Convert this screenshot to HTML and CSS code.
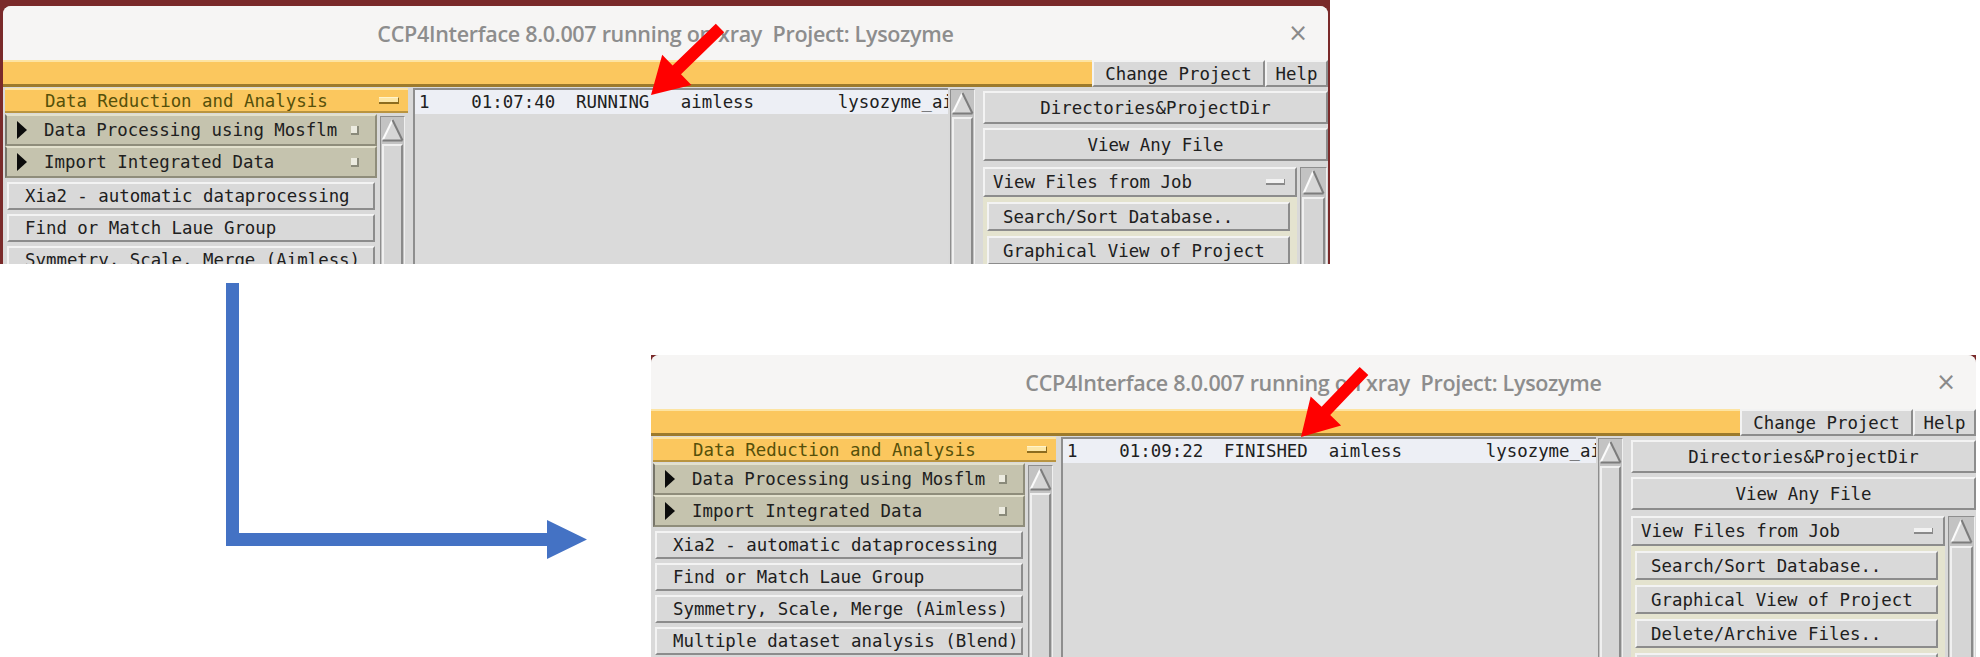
FILE: index.html
```html
<!DOCTYPE html>
<html>
<head>
<meta charset="utf-8">
<title>CCP4Interface job status</title>
<link rel="stylesheet" href="styles.css">
</head>
<body>

<div class="shot shot-top">
  <div class="win">
    <div class="titlebar">
      <span class="title">CCP4Interface 8.0.007 running on xray  Project: Lysozyme</span>
      <span class="close">×</span>
    </div>
    <div class="menubar">
      <div class="menufill"></div>
      <div class="btn mbtn change">Change Project</div>
      <div class="btn mbtn help">Help</div>
    </div>
    <div class="body">
      <div class="leftcol">
        <div class="modhead"><span class="modtext">Data Reduction and Analysis</span><span class="dash ydash"></span></div>
        <div class="leftinner">
          <div class="tasks">
            <div class="folder"><span class="tri"></span><span class="ftext">Data Processing using Mosflm</span><span class="ind"></span></div>
            <div class="folder"><span class="tri"></span><span class="ftext">Import Integrated Data</span><span class="ind"></span></div>
            <div class="btn task">Xia2 - automatic dataprocessing</div>
            <div class="btn task">Find or Match Laue Group</div>
            <div class="btn task">Symmetry, Scale, Merge (Aimless)</div>
            <div class="btn task">Multiple dataset analysis (Blend)</div>
            <div class="btn task"></div>
          </div>
          <div class="vscroll sc-left">
            <div class="sarrow"><svg width="23" height="24" viewBox="0 0 23 24"><polygon points="11.5,2 21.5,22.5 1.5,22.5" fill="#d6d6d6"/><line x1="1.5" y1="22.5" x2="11.5" y2="2" stroke="#fbfbfb" stroke-width="2"/><line x1="11.5" y1="2" x2="21.5" y2="22.5" stroke="#7c7c7c" stroke-width="2"/><line x1="1.5" y1="22.5" x2="21.5" y2="22.5" stroke="#7c7c7c" stroke-width="2"/></svg></div>
            <div class="slider"></div>
          </div>
        </div>
      </div>
      <div class="joblist">
        <div class="jobrow">1    01:07:40  RUNNING   aimless        lysozyme_aimless_1</div>
      </div>
      <div class="vscroll sc-list">
        <div class="sarrow"><svg width="23" height="24" viewBox="0 0 23 24"><polygon points="11.5,2 21.5,22.5 1.5,22.5" fill="#d6d6d6"/><line x1="1.5" y1="22.5" x2="11.5" y2="2" stroke="#fbfbfb" stroke-width="2"/><line x1="11.5" y1="2" x2="21.5" y2="22.5" stroke="#7c7c7c" stroke-width="2"/><line x1="1.5" y1="22.5" x2="21.5" y2="22.5" stroke="#7c7c7c" stroke-width="2"/></svg></div>
        <div class="slider"></div>
      </div>
      <div class="rightcol">
        <div class="btn rbtn">Directories&amp;ProjectDir</div>
        <div class="btn rbtn">View Any File</div>
        <div class="rlower">
          <div class="rlist">
            <div class="btn jobmenu"><span>View Files from Job</span><span class="dash gdash"></span></div>
            <div class="btn util">Search/Sort Database..</div>
            <div class="btn util">Graphical View of Project</div>
            <div class="btn util">Delete/Archive Files..</div>
            <div class="btn util"></div>
          </div>
          <div class="vscroll sc-right">
            <div class="sarrow"><svg width="23" height="26" viewBox="0 0 23 26"><polygon points="11.5,2 21.5,24.5 1.5,24.5" fill="#d6d6d6"/><line x1="1.5" y1="24.5" x2="11.5" y2="2" stroke="#fbfbfb" stroke-width="2"/><line x1="11.5" y1="2" x2="21.5" y2="24.5" stroke="#7c7c7c" stroke-width="2"/><line x1="1.5" y1="24.5" x2="21.5" y2="24.5" stroke="#7c7c7c" stroke-width="2"/></svg></div>
            <div class="slider"></div>
          </div>
        </div>
      </div>
    </div>
  </div>
</div>

<div class="shot shot-bottom">
  <div class="win">
    <div class="titlebar">
      <span class="title">CCP4Interface 8.0.007 running on xray  Project: Lysozyme</span>
      <span class="close">×</span>
    </div>
    <div class="menubar">
      <div class="menufill"></div>
      <div class="btn mbtn change">Change Project</div>
      <div class="btn mbtn help">Help</div>
    </div>
    <div class="body">
      <div class="leftcol">
        <div class="modhead"><span class="modtext">Data Reduction and Analysis</span><span class="dash ydash"></span></div>
        <div class="leftinner">
          <div class="tasks">
            <div class="folder"><span class="tri"></span><span class="ftext">Data Processing using Mosflm</span><span class="ind"></span></div>
            <div class="folder"><span class="tri"></span><span class="ftext">Import Integrated Data</span><span class="ind"></span></div>
            <div class="btn task">Xia2 - automatic dataprocessing</div>
            <div class="btn task">Find or Match Laue Group</div>
            <div class="btn task">Symmetry, Scale, Merge (Aimless)</div>
            <div class="btn task">Multiple dataset analysis (Blend)</div>
            <div class="btn task"></div>
          </div>
          <div class="vscroll sc-left">
            <div class="sarrow"><svg width="23" height="24" viewBox="0 0 23 24"><polygon points="11.5,2 21.5,22.5 1.5,22.5" fill="#d6d6d6"/><line x1="1.5" y1="22.5" x2="11.5" y2="2" stroke="#fbfbfb" stroke-width="2"/><line x1="11.5" y1="2" x2="21.5" y2="22.5" stroke="#7c7c7c" stroke-width="2"/><line x1="1.5" y1="22.5" x2="21.5" y2="22.5" stroke="#7c7c7c" stroke-width="2"/></svg></div>
            <div class="slider"></div>
          </div>
        </div>
      </div>
      <div class="joblist">
        <div class="jobrow">1    01:09:22  FINISHED  aimless        lysozyme_aimless_1</div>
      </div>
      <div class="vscroll sc-list">
        <div class="sarrow"><svg width="23" height="24" viewBox="0 0 23 24"><polygon points="11.5,2 21.5,22.5 1.5,22.5" fill="#d6d6d6"/><line x1="1.5" y1="22.5" x2="11.5" y2="2" stroke="#fbfbfb" stroke-width="2"/><line x1="11.5" y1="2" x2="21.5" y2="22.5" stroke="#7c7c7c" stroke-width="2"/><line x1="1.5" y1="22.5" x2="21.5" y2="22.5" stroke="#7c7c7c" stroke-width="2"/></svg></div>
        <div class="slider"></div>
      </div>
      <div class="rightcol">
        <div class="btn rbtn">Directories&amp;ProjectDir</div>
        <div class="btn rbtn">View Any File</div>
        <div class="rlower">
          <div class="rlist">
            <div class="btn jobmenu"><span>View Files from Job</span><span class="dash gdash"></span></div>
            <div class="btn util">Search/Sort Database..</div>
            <div class="btn util">Graphical View of Project</div>
            <div class="btn util">Delete/Archive Files..</div>
            <div class="btn util"></div>
          </div>
          <div class="vscroll sc-right">
            <div class="sarrow"><svg width="23" height="26" viewBox="0 0 23 26"><polygon points="11.5,2 21.5,24.5 1.5,24.5" fill="#d6d6d6"/><line x1="1.5" y1="24.5" x2="11.5" y2="2" stroke="#fbfbfb" stroke-width="2"/><line x1="11.5" y1="2" x2="21.5" y2="24.5" stroke="#7c7c7c" stroke-width="2"/><line x1="1.5" y1="24.5" x2="21.5" y2="24.5" stroke="#7c7c7c" stroke-width="2"/></svg></div>
            <div class="slider"></div>
          </div>
        </div>
      </div>
    </div>
  </div>
</div>

<svg class="overlay" width="1980" height="657" viewBox="0 0 1980 657">
  <polygon class="blue" points="226,283 239,283 239,533 547,533 547,520 587,539.5 547,559 547,546 226,546"/>
  <polygon class="red" points="715.8,23.7 672.6,65.6 662.2,54.8 651,95 691.4,85 681,74.2 724.2,32.3"/>
  <polygon class="red" points="1359.7,366.9 1321.6,406.8 1310.7,396.4 1301,437 1341.1,425.4 1330.2,415 1368.3,375.1"/>
</svg>

</body>
</html>
```

FILE: styles.css
```css
* {
  box-sizing: border-box;
  margin: 0;
  padding: 0;
}

html, body {
  width: 1980px;
  height: 657px;
  overflow: hidden;
  background: #ffffff;
}

body {
  position: relative;
  font-family: "DejaVu Sans Mono", "Liberation Mono", monospace;
  font-size: 17.4px;
  color: #202020;
}

/* screenshot frames placed on the slide canvas */
.shot {
  position: absolute;
  overflow: hidden;
  background: #7a2a2a;
}

.shot-top {
  left: 0;
  top: 0;
  width: 1330px;
  height: 264px;
  padding: 6px 2px 0 3px;
}

.shot-bottom {
  left: 651px;
  top: 355px;
  width: 1325px;
  height: 302px;
}

.win {
  width: 1325px;
  height: 380px;
  background: #d9d9d9;
  border-radius: 8px 8px 0 0;
  overflow: hidden;
  display: flex;
  flex-direction: column;
}

/* title bar */
.titlebar {
  flex: none;
  height: 54px;
  background: #f6f5f4;
  display: grid;
  grid-template-columns: 1fr auto 1fr;
  align-items: center;
}

.title {
  grid-column: 2;
  font-family: "Open Sans", "Noto Sans", sans-serif;
  font-weight: 600;
  font-size: 21.5px;
  letter-spacing: -0.3px;
  color: #8d8d8d;
  white-space: pre;
}

.close {
  grid-column: 3;
  justify-self: end;
  padding-right: 20px;
  font-family: "DejaVu Sans", sans-serif;
  font-size: 24px;
  color: #8a8a8a;
}

/* generic raised Tk button */
.btn {
  background: #d9d9d9;
  border: 2px solid;
  border-color: #f3f3f3 #8c8c8c #8c8c8c #f3f3f3;
  white-space: pre;
  display: flex;
  align-items: center;
  overflow: hidden;
}

/* menu bar */
.menubar {
  flex: none;
  height: 27px;
  display: flex;
}

.menufill {
  flex: 1;
  background: #fbc75e;
  border-top: 2px solid #fde4a2;
  border-bottom: 3px solid #9c7a2c;
}

.mbtn {
  justify-content: center;
}

.change {
  width: 173px;
}

.help {
  width: 63px;
}

/* body */
.body {
  flex: 1;
  display: flex;
  padding: 1px 0 0 2px;
}

.leftcol {
  width: 403px;
  display: flex;
  flex-direction: column;
}

.modhead {
  height: 25px;
  background: #fbc75e;
  border-top: 2px solid #fde4a2;
  border-bottom: 2px solid #b99440;
  display: flex;
  align-items: center;
  padding-left: 40px;
  color: #55500a;
}

.modtext {
  flex: 1;
  white-space: pre;
}

.dash {
  display: block;
}

.ydash {
  width: 20px;
  height: 7px;
  margin-right: 9px;
  background: #fde7a6;
  border-top: 1px solid #fff4cc;
  border-bottom: 2px solid #8d6c1e;
  border-right: 1px solid #8d6c1e;
}

.leftinner {
  flex: 1;
  display: flex;
  gap: 3px;
  margin-top: 1px;
}

.tasks {
  width: 372px;
  display: flex;
  flex-direction: column;
}

.folder {
  height: 32px;
  background: #c5c3ae;
  border-top: 2px solid #e3e1cd;
  border-left: 2px solid #77756a;
  border-right: 2px solid #8f8d7b;
  border-bottom: 2px solid #8f8d7b;
  display: flex;
  align-items: center;
  padding-left: 10px;
}

.tri {
  width: 0;
  height: 0;
  border-top: 9.5px solid transparent;
  border-bottom: 9.5px solid transparent;
  border-left: 10px solid #0c0c0c;
  margin-right: 17px;
}

.ftext {
  flex: 1;
  white-space: pre;
}

.ind {
  width: 8px;
  height: 9px;
  margin-right: 16px;
  background: #ecebe0;
  border-right: 2px solid #8a8a7a;
  border-bottom: 2px solid #8a8a7a;
}

.task {
  height: 28px;
  margin: 4px 2px 0 2px;
  padding-left: 16px;
}

/* scrollbars */
.vscroll {
  width: 25px;
  display: flex;
  flex-direction: column;
  background: #c3c3c3;
  border-top: 1px solid #8e8e8e;
  border-left: 1px solid #8e8e8e;
  border-right: 1px solid #efefef;
}

.sarrow {
  flex: none;
  display: flex;
  justify-content: center;
  padding-top: 1px;
}

.slider {
  flex: 1;
  margin: 2px 1px 0 1px;
  background: #d5d5d5;
  border: 2px solid;
  border-color: #f0f0f0 #8a8a8a #8a8a8a #f0f0f0;
  border-bottom: none;
}

.sc-left {
  margin-top: 2px;
}

/* job list */
.joblist {
  width: 535px;
  margin-left: 5px;
  background: #dadada;
  border-top: 2px solid #8e8e8e;
  border-left: 2px solid #8e8e8e;
  overflow: hidden;
}

.jobrow {
  height: 24px;
  background: #edeff5;
  padding-left: 4px;
  white-space: pre;
  line-height: 24px;
}

.sc-list {
  margin-left: 2px;
  margin-top: 1px;
}

/* right column */
.rightcol {
  width: 345px;
  margin-left: 8px;
  padding-top: 3px;
  display: flex;
  flex-direction: column;
}

.rbtn {
  height: 33px;
  justify-content: center;
  margin-bottom: 4px;
}

.rlower {
  flex: 1;
  display: flex;
  margin-top: 2px;
}

.rlist {
  width: 314px;
  display: flex;
  flex-direction: column;
  background: #e4e3cf;
}

.jobmenu {
  height: 30px;
  padding-left: 8px;
  justify-content: space-between;
}

.gdash {
  width: 19px;
  height: 6px;
  margin-right: 10px;
  background: #f2f2f2;
  border-bottom: 2px solid #8a8a8a;
  border-right: 1px solid #8a8a8a;
}

.util {
  height: 29px;
  width: 303px;
  margin: 5px 0 0 4px;
  padding-left: 14px;
}

.sc-right {
  width: 27px;
  margin-left: 3px;
}

/* annotation overlay */
.overlay {
  position: absolute;
  left: 0;
  top: 0;
  pointer-events: none;
}

.blue {
  fill: #4472c4;
}

.red {
  fill: #ff0000;
}
```
